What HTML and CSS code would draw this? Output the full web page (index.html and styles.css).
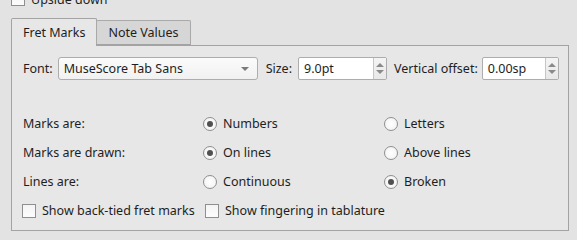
FILE: index.html
```html
<!DOCTYPE html>
<html lang="en">
<head>
    <meta charset="UTF-8">
    <title>Fret Marks</title>
    <link rel="stylesheet" href="styles.css">
</head>
<body>
    <div class="dialog">
        <label class="check top-check"><span class="box"></span>Upside down</label>

        <div class="tabs">
            <div class="tab active">Fret Marks</div>
            <div class="tab">Note Values</div>
        </div>

        <div class="pane">
            <div class="font-row">
                <span class="label">Font:</span>
                <div class="combo">
                    <span>MuseScore Tab Sans</span>
                    <span class="combo-arrow"></span>
                </div>
                <span class="label size-label">Size:</span>
                <div class="spin size-spin">
                    <span class="spin-value">9.0pt</span>
                    <span class="spin-buttons"><span class="up"></span><span class="down"></span></span>
                </div>
                <span class="label offset-label">Vertical offset:</span>
                <div class="spin offset-spin">
                    <span class="spin-value">0.00sp</span>
                    <span class="spin-buttons"><span class="up"></span><span class="down"></span></span>
                </div>
            </div>

            <div class="options">
                <span class="label">Marks are:</span>
                <label class="radio"><span class="dot checked"></span>Numbers</label>
                <label class="radio"><span class="dot"></span>Letters</label>

                <span class="label">Marks are drawn:</span>
                <label class="radio"><span class="dot checked"></span>On lines</label>
                <label class="radio"><span class="dot"></span>Above lines</label>

                <span class="label">Lines are:</span>
                <label class="radio"><span class="dot"></span>Continuous</label>
                <label class="radio"><span class="dot checked"></span>Broken</label>
            </div>

            <div class="checks">
                <label class="check back-tied"><span class="box"></span>Show back-tied fret marks</label>
                <label class="check"><span class="box"></span>Show fingering in tablature</label>
            </div>
        </div>
    </div>
</body>
</html>
```

FILE: styles.css
```css
* {
    box-sizing: border-box;
}
html, body {
    margin: 0;
    height: 100%;
}
body {
    background-color: #e3e3e3;
    font-family: 'Noto Sans', 'Open Sans', sans-serif;
    font-size: 12.5px;
    color: #1e1e1e;
    overflow: hidden;
    white-space: nowrap;
}
.dialog {
    padding-left: 11px;
    width: 569px;
}
.check {
    display: flex;
    align-items: center;
    gap: 6px;
}
.box {
    width: 14px;
    height: 14px;
    border: 1px solid #8f8f8f;
    background: linear-gradient(#f4f4f4, #fcfcfc);
    flex: none;
}
.top-check {
    height: 14px;
    margin-top: -8px;
    margin-bottom: 12px;
    gap: 6px;
}
.tabs {
    display: flex;
    align-items: flex-end;
    position: relative;
    z-index: 1;
}
.tab {
    height: 25px;
    padding: 0 11px 1px 11px;
    display: flex;
    align-items: center;
    border: 1px solid #a9a9a9;
    border-radius: 2px 2px 0 0;
    background-color: #d6d6d6;
    border-bottom: 1px solid #a3a3a3;
}
.tab.active {
    height: 28px;
    padding: 0 11px 1px 11px;
    background-color: #e7e7e7;
    border-color: #a3a3a3;
    border-bottom: none;
    margin-bottom: -1px;
}
.tab + .tab {
    margin-left: -1px;
}
.pane {
    border: 1px solid #a3a3a3;
    background-color: #e7e7e7;
    padding: 11px 11px 5px 11px;
    height: 186px;
}
.font-row {
    display: flex;
    align-items: center;
    height: 23px;
}
.label {
    flex: none;
}
.combo {
    width: 200px;
    height: 23px;
    margin-left: 5px;
    border: 1px solid #adadad;
    border-radius: 3px;
    background: linear-gradient(#fbfbfb, #f1f1f1);
    display: flex;
    align-items: center;
    justify-content: space-between;
    padding: 0 8px 0 5px;
    flex: none;
}
.combo-arrow {
    width: 0;
    height: 0;
    border-left: 4px solid transparent;
    border-right: 4px solid transparent;
    border-top: 4px solid #7a7a7a;
}
.size-label {
    margin-left: 8px;
}
.spin {
    height: 23px;
    border: 1px solid #adadad;
    border-radius: 2px;
    background-color: #ffffff;
    display: flex;
    align-items: stretch;
    flex: none;
}
.size-spin {
    width: 89px;
    margin-left: 6px;
}
.offset-spin {
    width: 77px;
    margin-left: 4px;
}
.offset-label {
    margin-left: 7px;
}
.spin-value {
    flex: 1;
    display: flex;
    align-items: center;
    padding-left: 5px;
}
.spin-buttons {
    width: 13px;
    border-left: 1px solid #c6c6c6;
    background: linear-gradient(#f4f4f4, #e8e8e8);
    display: flex;
    flex-direction: column;
    align-items: center;
    justify-content: center;
    gap: 3px;
}
.spin-buttons .up {
    width: 0;
    height: 0;
    border-left: 4px solid transparent;
    border-right: 4px solid transparent;
    border-bottom: 4px solid #8a8a8a;
}
.spin-buttons .down {
    width: 0;
    height: 0;
    border-left: 4px solid transparent;
    border-right: 4px solid transparent;
    border-top: 4px solid #8a8a8a;
}
.options {
    display: grid;
    grid-template-columns: 180px 181px 1fr;
    grid-auto-rows: 29px;
    align-items: center;
    margin-top: 29px;
}
.radio {
    display: flex;
    align-items: center;
    gap: 6px;
}
.dot {
    width: 14px;
    height: 14px;
    border: 1px solid #8f8f8f;
    border-radius: 50%;
    background: radial-gradient(#ffffff, #f0f0f0);
    display: flex;
    align-items: center;
    justify-content: center;
}
.dot.checked::after {
    content: "";
    width: 6px;
    height: 6px;
    border-radius: 50%;
    background-color: #505050;
}
.checks {
    display: flex;
    height: 29px;
    align-items: center;
    margin-left: -1px;
}
.back-tied {
    width: 183px;
    flex: none;
}
```
